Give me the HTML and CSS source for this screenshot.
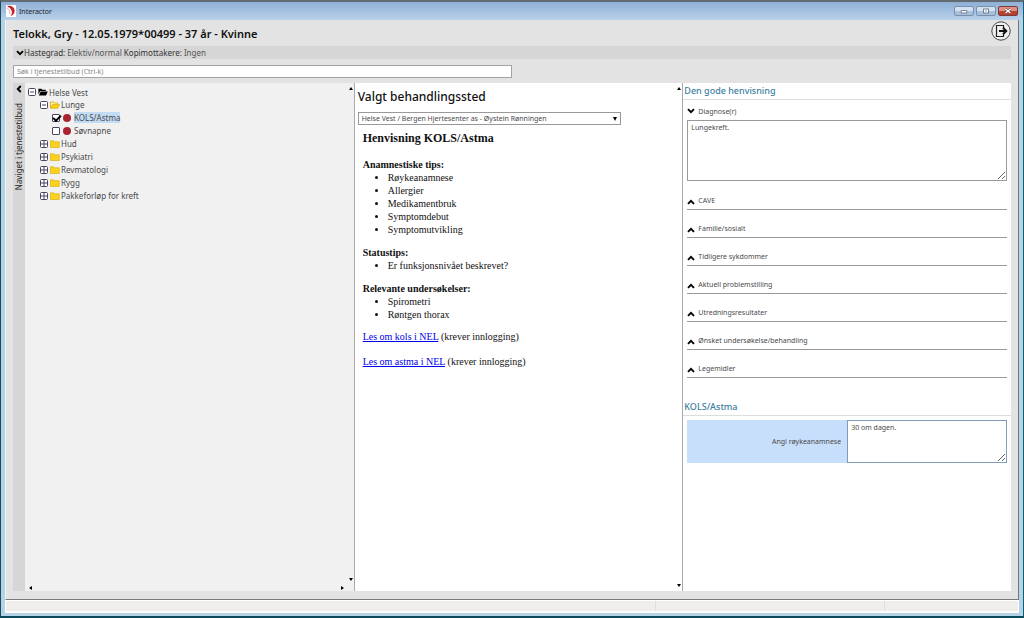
FILE: index.html
```html
<!DOCTYPE html>
<html lang="no">
<head>
<meta charset="utf-8">
<meta name="viewport" content="width=device-width, initial-scale=1">
<title>Interactor</title>
<link rel="stylesheet" href="styles.css">
</head>
<body>
<svg class="defs" aria-hidden="true">
  <symbol id="down" viewBox="0 0 8 6"><path d="M1 1.2 4 4.2 7 1.2" fill="none" stroke="#000" stroke-width="1.9"/></symbol>
  <symbol id="up" viewBox="0 0 8 6"><path d="M1 4.8 4 1.8 7 4.8" fill="none" stroke="#000" stroke-width="1.9"/></symbol>
  <symbol id="plus" viewBox="0 0 8 8"><rect x=".5" y=".5" width="7" height="7" rx="1" fill="#fff" stroke="#4b4460"/><path d="M1 4H7M4 1V7" stroke="#4b4460"/></symbol>
  <symbol id="minus" viewBox="0 0 8 8"><rect x=".5" y=".5" width="7" height="7" rx="1" fill="#fff" stroke="#4b4460"/><path d="M2 4H6" stroke="#4b4460"/></symbol>
  <symbol id="folder" viewBox="0 0 10 8"><path d="M.5 .8h3.200l.8 1h4.700v5.700H.5z" fill="#fbd21c" stroke="#d9a800" stroke-width=".6"/></symbol>
  <symbol id="folder-open" viewBox="0 0 10 8"><path d="M.5 7V1h3l.8 1h3.5v1.5" fill="#fff3a8" stroke="#d9a800" stroke-width=".8"/><path d="M.5 7.2 2.5 3.6h7L7.6 7.2z" fill="#fbd21c" stroke="#d9a800" stroke-width=".7"/></symbol>
  <symbol id="folder-dark" viewBox="0 0 10 8"><path d="M.4 6.4V.8h3l.8 1h3.6v1.2H2.2z" fill="#000"/><path d="M.8 7.4 2.7 3.6h7.1L8 7.4z" fill="#000"/></symbol>
</svg>
<div class="window">
  <header class="titlebar">
    <svg class="logo" viewBox="0 0 10 12"><path d="M0 0h10v12H0z" fill="#fff"/><path d="M1 1C6 0 9 3 8.6 6.5 8.3 9 6.500 10.700 4.500 11.200 6.200 9 6.400 7 5.300 5 4.400 3.300 3 2.300 1 1z" fill="#c8202c"/><path d="M.8 3.500C3 4 4.500 6 3.800 9" fill="none" stroke="#df8b8f" stroke-width=".8"/></svg>
    <span class="app-name">Interactor</span>
    <button class="win-btn" aria-label="Minimer"><svg viewBox="0 0 20 10"><rect x="6.500" y="4.500" width="7" height="3" fill="#fff" stroke="#667487"/></svg></button>
    <button class="win-btn" aria-label="Maksimer"><svg viewBox="0 0 20 10"><rect x="7" y="2.500" width="6" height="5" fill="#fff" stroke="#566478"/><rect x="9" y="4.500" width="2" height="1" fill="#566478"/></svg></button>
    <button class="win-btn close" aria-label="Lukk"><svg viewBox="0 0 20 10"><path d="M7 2.500 13 7.500M13 2.500 7 7.500" stroke="#6d3a38" stroke-width="3.200"/><path d="M7 2.500 13 7.500M13 2.500 7 7.500" stroke="#fff" stroke-width="1.900"/></svg></button>
  </header>
  <div class="client">
    <div class="patient">
      <h1>Telokk, Gry - 12.05.1979*00499 - 37 år - Kvinne</h1>
      <button class="exit" aria-label="Avslutt"><svg viewBox="0 0 20 20"><circle cx="10" cy="10" r="9.200" fill="#f0f0f0" stroke="#444" stroke-width="1"/><path d="M12.500 7V4.500h-7v11h7V13" fill="none" stroke="#222" stroke-width="1.200"/><path d="M8 10h7M12 6.800 15.300 10 12 13.200" fill="none" stroke="#111" stroke-width="1.900"/></svg></button>
    </div>
    <button class="meta"><svg class="chev"><use href="#down"/></svg><span>Hastegrad: <i>Elektiv/normal</i> Kopimottakere: <i>Ingen</i></span></button>
    <input class="search" type="text" placeholder="Søk i tjenestetilbud (Ctrl-k)" aria-label="Søk i tjenestetilbud">
    <main class="columns">
      <button class="strip"><svg class="back" viewBox="0 0 6 8"><path d="M4.800 1 1.800 4 4.800 7" fill="none" stroke="#000" stroke-width="1.900"/></svg><span>Naviget i tjenestetilbud</span></button>
      <nav class="tree scroll">
        <ul>
          <li><div class="row root"><svg class="box"><use href="#minus"/></svg><svg class="fold"><use href="#folder-dark"/></svg><span>Helse Vest</span></div>
            <ul>
              <li><div class="row"><svg class="box"><use href="#minus"/></svg><svg class="fold"><use href="#folder-open"/></svg><span>Lunge</span></div>
                <ul>
                  <li><label class="row leaf"><input type="checkbox" checked><b class="dot"></b><span class="selected">KOLS/Astma</span></label></li>
                  <li><label class="row leaf"><input type="checkbox"><b class="dot"></b><span>Søvnapne</span></label></li>
                </ul>
              </li>
              <li><div class="row"><svg class="box"><use href="#plus"/></svg><svg class="fold"><use href="#folder"/></svg><span>Hud</span></div></li>
              <li><div class="row"><svg class="box"><use href="#plus"/></svg><svg class="fold"><use href="#folder"/></svg><span>Psykiatri</span></div></li>
              <li><div class="row"><svg class="box"><use href="#plus"/></svg><svg class="fold"><use href="#folder"/></svg><span>Revmatologi</span></div></li>
              <li><div class="row"><svg class="box"><use href="#plus"/></svg><svg class="fold"><use href="#folder"/></svg><span>Rygg</span></div></li>
              <li><div class="row"><svg class="box"><use href="#plus"/></svg><svg class="fold"><use href="#folder"/></svg><span>Pakkeforløp for kreft</span></div></li>
            </ul>
          </li>
        </ul>
        <i class="arrow a-up"></i><i class="arrow a-down"></i><i class="arrow a-left"></i><i class="arrow a-right"></i>
      </nav>
      <section class="guide scroll">
        <h2>Valgt behandlingssted</h2>
        <div class="select-wrap"><select aria-label="Valgt behandlingssted"><option>Helse Vest / Bergen Hjertesenter as - Øystein Rønningen</option></select></div>
        <article>
          <h3>Henvisning KOLS/Astma</h3>
          <h4>Anamnestiske tips:</h4>
          <ul><li>Røykeanamnese</li><li>Allergier</li><li>Medikamentbruk</li><li>Symptomdebut</li><li>Symptomutvikling</li></ul>
          <h4>Statustips:</h4>
          <ul><li>Er funksjonsnivået beskrevet?</li></ul>
          <h4>Relevante undersøkelser:</h4>
          <ul><li>Spirometri</li><li>Røntgen thorax</li></ul>
          <p><a href="#kols">Les om kols i NEL</a> (krever innlogging)</p>
          <p><a href="#astma">Les om astma i NEL</a> (krever innlogging)</p>
        </article>
        <i class="arrow a-up"></i><i class="arrow a-down"></i>
      </section>
      <section class="form">
        <h2>Den gode henvisning</h2>
        <div class="open-field">
          <label for="diag"><svg class="chev"><use href="#down"/></svg>Diagnose(r)</label>
          <textarea id="diag">Lungekreft.</textarea>
        </div>
        <div class="folds">
          <button><svg class="chev"><use href="#up"/></svg>CAVE</button>
          <button><svg class="chev"><use href="#up"/></svg>Familie/sosialt</button>
          <button><svg class="chev"><use href="#up"/></svg>Tidligere sykdommer</button>
          <button><svg class="chev"><use href="#up"/></svg>Aktuell problemstilling</button>
          <button><svg class="chev"><use href="#up"/></svg>Utredningsresultater</button>
          <button><svg class="chev"><use href="#up"/></svg>Ønsket undersøkelse/behandling</button>
          <button><svg class="chev"><use href="#up"/></svg>Legemidler</button>
        </div>
        <h2>KOLS/Astma</h2>
        <div class="pair">
          <label for="smoke">Angi røykeanamnese</label>
          <textarea id="smoke">30 om dagen.</textarea>
        </div>
      </section>
    </main>
  </div>
  <footer class="status"><span></span><span></span><span></span></footer>
</div>
</body>
</html>
```
FILE: styles.css
```css
* { box-sizing: border-box; margin: 0; padding: 0; }
body { font-family: "Noto Sans", "Open Sans", sans-serif; font-size: 8px; color: #4a4a4a; }
button, input, select, textarea { font: inherit; color: inherit; border: 0; background: none; border-radius: 0; }
ul { list-style: none; }
i { font-style: normal; }
svg { flex: none; display: block; }
.defs { position: absolute; width: 0; height: 0; }

.window {
  display: flex; flex-direction: column; min-height: 100vh;
  padding: 0 4px 3px 4px; background: #b5d3e7;
  border: 1px solid #1c4c5c; border-top: 2px solid #626a72; border-right-color: #0a6076; border-bottom: 2px solid #0b4a5a;
}
.titlebar {
  display: flex; align-items: center; gap: 2px; height: 18px; margin: 0 -4px; padding: 0 0 0 5px;
  background: linear-gradient(#8fb0d6, #b9d1ea); color: #222;
}
.logo { width: 10px; height: 12px; margin-right: 1px; }
.app-name { flex: 1; font-size: 7px; }
.win-btn { width: 20px; height: 10px; border: 1px solid #7890ac; border-radius: 2px; background: linear-gradient(#d3e1f1 50%, #a9c0dc 50%); }
.win-btn svg { width: 100%; height: 100%; }
.close { margin-right: 5px; border-color: #7c3b3a; background: linear-gradient(#dd9184 45%, #b9402f 45%); }

.client { flex: 1; display: flex; flex-direction: column; padding: 0 7px 8px; background: #e3e3e3; border-left: 1px solid #f3f3f3; border-right: 1px solid #777; border-bottom: 1px solid #7a7a7a; }
.patient { display: flex; justify-content: space-between; height: 26px; }
h1 { font-size: 11px; line-height: 28px; font-weight: 600; color: #111; }
.exit { width: 20px; height: 20px; margin-top: 1px; }
.exit svg { width: 20px; height: 20px; }
.meta { display: flex; align-items: center; height: 13px; padding: 0 3px; background: #d6d6d6; color: #333; text-align: left; }
.meta i { color: #555; }
.chev { width: 8px; height: 6px; }
.search { width: 50%; height: 13px; margin: 6px 0 5px; padding: 0 3px; font-size: 7px; border: 1px solid #a3a3a3; background: #fff; }
.search::placeholder { color: #888; }

.columns { flex: 1; display: grid; grid-template-columns: 12px 1fr 1fr 1fr; background: #fff; }
.strip { display: flex; flex-direction: column; align-items: center; justify-content: flex-start; gap: 10px; padding-top: 2px; background: #d6d6d6; color: #222; }
.back { width: 6px; height: 8px; }
.strip span { writing-mode: vertical-rl; transform: rotate(180deg); line-height: 12px; }

.scroll { position: relative; }
.guide, .form { border-left: 1px solid #aaa; }
.tree { padding: 3px; background: #f1f1f1; }
.tree ul ul { padding-left: 12px; }
.row { display: flex; align-items: center; gap: 1px; height: 13px; line-height: 13px; }
.root { height: 12px; }
.box { width: 8px; height: 8px; margin-right: 1px; }
.fold { width: 10px; height: 8px; }
.leaf { gap: 3px; }
.leaf input { appearance: none; display: grid; place-items: center; width: 8px; height: 8px; border: 1px solid #4b4460; border-radius: 1px; background: #fff; }
.leaf input:checked::after { content: ""; width: 6px; height: 3px; border: solid #000; border-width: 0 0 2px 2px; transform: rotate(-45deg); }
.dot { width: 8px; height: 8px; border-radius: 50%; background: #aa2430; }
.selected { background: #c3dcf5; line-height: 11px; }

.arrow { position: absolute; border: 2px solid transparent; }
.a-up { top: 4px; right: 1px; border-bottom: 3px solid #000; border-top: 0; }
.a-down { bottom: 4px; right: 1px; border-top: 3px solid #000; border-bottom: 0; }
.tree .a-down { bottom: 10px; }
.a-left { bottom: 1px; left: 4px; border-right: 3px solid #000; border-left: 0; }
.a-right { bottom: 1px; right: 10px; border-left: 3px solid #000; border-right: 0; }

.guide { padding: 5px 3px; }
.guide h2 { font-size: 12px; line-height: 18px; font-weight: 500; color: #111; }
.select-wrap { position: relative; width: 82%; margin-top: 6px; }
.select-wrap::after { content: ""; position: absolute; right: 4px; top: 5px; border: 2px solid transparent; border-top: 4px solid #000; border-bottom: 0; }
select { appearance: none; display: block; width: 100%; height: 13px; padding: 0 3px; font-size: 7px; border: 1px solid #999; background: #fff; }
article { padding: 6px 5px; font: 10px/13px "Liberation Serif", serif; color: #111; }
h3 { font-size: 12px; line-height: 14px; }
h4 { font-size: 10px; margin-top: 10px; }
h3 + h4 { margin-top: 13px; }
article ul { list-style: disc; padding-left: 25px; }
article p { margin-top: 9px; }
article p + p { margin-top: 12px; }
a { color: #00e; }

.form { font-size: 7px; }
.form h2 { font-size: 9px; line-height: 16px; font-weight: 500; color: #3a7f9f; border-bottom: 1px solid #ddd; padding-left: 1px; }
.open-field { padding: 5px 4px 0; }
.open-field label { display: flex; align-items: center; gap: 3px; height: 12px; }
textarea { display: block; width: 100%; padding: 1px 3px; line-height: 11px; border: 1px solid #999; background: #fff; }
#diag { height: 61px; margin-top: 3px; }
.folds { display: grid; padding: 0 4px; margin: 1px 0 21px; }
.folds button { display: flex; align-items: flex-end; gap: 3px; height: 28px; padding-bottom: 2px; line-height: 12px; border-bottom: 1px solid #999; text-align: left; }
.folds .chev { margin-bottom: 2px; }
.pair { display: grid; grid-template-columns: 1fr 1fr; margin: 4px 4px 0; background: #c8dffc; }
.pair label { align-self: center; padding-right: 6px; text-align: right; }
.pair textarea { height: 43px; border-color: #7f9db9; }

.status { display: grid; grid-template-columns: 650fr 229fr 134fr; height: 13px; background: #f0eded; border: solid #fff; border-width: 1px 1px 2px; }
.status span + span { border-left: 1px solid #ddd; }
```
